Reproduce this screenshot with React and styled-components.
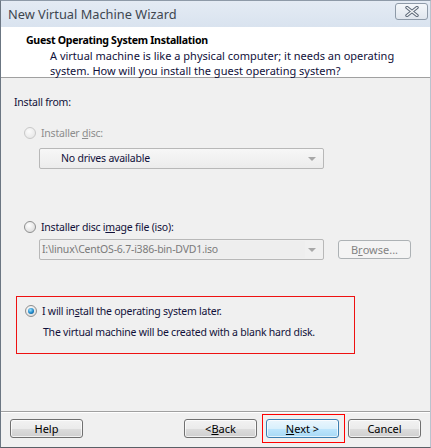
import React from 'react';
import styled, { createGlobalStyle } from 'styled-components';

const Global = createGlobalStyle`
  html, body { margin: 0; padding: 0; background: #f0f0f0; }
  body { font-family: 'Noto Sans', 'Open Sans', sans-serif; }
`;

const FONT = `'Noto Sans', 'Open Sans', sans-serif`;

const Window = styled.div`
  width: 431px;
  height: 448px;
  box-sizing: border-box;
  display: flex;
  flex-direction: column;
  border-left: 1px solid #6b7682;
  border-right: 1px solid #b9c3ce;
  border-bottom: 1px solid #5a5f66;
  border-top: 1px solid #8e9aa8;
  background: #f0f0f0;
  font-family: ${FONT};
  font-size: 10.5px;
  letter-spacing: -0.22px;
  color: #10103a;
`;

const TitleBar = styled.div`
  height: 26px;
  display: flex;
  align-items: center;
  justify-content: space-between;
  padding: 0 2px 0 7px;
  background: linear-gradient(#e4ebf4, #d9e3ef);
`;

const Title = styled.div`
  font-size: 12.8px;
  letter-spacing: 0;
  color: #3e4650;
`;

const CloseButton = styled.div`
  width: 31px;
  height: 15px;
  margin-top: -6px;
  border: 1px solid #8e9aa8;
  border-radius: 3px;
  background: linear-gradient(#f4f7fa, #e0e6ee);
  display: flex;
  align-items: center;
  justify-content: center;
`;

const Header = styled.div`
  height: 51px;
  background: #ffffff;
  border-bottom: 1px solid #a0a0a0;
  box-sizing: border-box;
  padding: 6px 0 0 25px;
`;

const HeaderTitle = styled.div`
  font-weight: bold;
  font-size: 10.6px;
  letter-spacing: -0.3px;
  line-height: 15px;
  color: #000;
`;

const HeaderText = styled.div`
  margin-left: 24px;
  font-size: 11px;
  letter-spacing: 0;
  line-height: 15px;
  color: #10103a;
`;

const Body = styled.div`
  flex: 1;
  padding: 17px 0 0 13px;
  display: flex;
  flex-direction: column;
  align-items: flex-start;
`;

const Label = styled.div`
  line-height: 15px;
  margin-top: ${p => p.$top || 0}px;
  margin-left: ${p => p.$left || 0}px;
  color: ${p => (p.$disabled ? '#8d8d8d' : '#10103a')};
`;

const RadioRow = styled.div`
  display: flex;
  align-items: center;
  gap: 5px;
  height: 15px;
  margin-top: ${p => p.$top || 0}px;
  margin-left: ${p => p.$left || 0}px;
  color: ${p => (p.$disabled ? '#8d8d8d' : '#10103a')};
`;

const RadioDot = styled.span`
  width: 12px;
  height: 12px;
  border-radius: 50%;
  box-sizing: border-box;
  border: 1px solid ${p => (p.$disabled ? '#c8c8c8' : '#8e8f8f')};
  background: ${p =>
    p.$disabled
      ? 'radial-gradient(circle at 40% 35%, #fbfbfb, #e2e2e2)'
      : 'radial-gradient(circle at 40% 35%, #ffffff, #d4d4d4)'};
  display: flex;
  align-items: center;
  justify-content: center;
  &::after {
    content: '';
    display: ${p => (p.$checked ? 'block' : 'none')};
    width: 6px;
    height: 6px;
    border-radius: 50%;
    background: radial-gradient(circle at 40% 35%, #9fe3ff, #1b86c8 55%, #0b3f6c);
  }
`;

const Combo = styled.div`
  width: 285px;
  height: 21px;
  box-sizing: border-box;
  margin-top: ${p => p.$top || 0}px;
  margin-left: 25px;
  border: 1px solid #b8b8b8;
  border-radius: 2px;
  background: ${p => (p.$flat ? '#f0f0f0' : 'linear-gradient(#f7f7f7, #ececec)')};
  display: flex;
  align-items: center;
  position: relative;
  color: ${p => (p.$disabled ? '#7b7b7b' : '#10103a')};
`;

const ComboText = styled.div`
  flex: 1;
  height: 17px;
  line-height: 17px;
  margin: 0 18px 0 2px;
  padding-left: ${p => p.$pad || 0}px;
  background: ${p => (p.$field ? '#eeeeee' : 'transparent')};
  white-space: nowrap;
`;

const Arrow = styled.span`
  position: absolute;
  right: 7px;
  top: 8px;
  width: 0;
  height: 0;
  border-left: 4px solid transparent;
  border-right: 4px solid transparent;
  border-top: 4px solid #a8a8a8;
`;

const ComboRow = styled.div`
  display: flex;
  align-items: center;
  gap: 14px;
  margin-top: ${p => p.$top || 0}px;
  & > ${Combo} { margin-top: 0; }
`;

const Button = styled.div`
  width: 73px;
  height: 19px;
  box-sizing: border-box;
  border: 1px solid ${p => (p.$focus ? '#3c7fb1' : p.$disabled ? '#adb2b5' : '#707070')};
  border-radius: 3px;
  background: ${p =>
    p.$disabled
      ? '#f4f4f4'
      : p.$focus
      ? 'linear-gradient(#eaf6fd 0%, #d9f0fc 50%, #bee6fd 51%, #a7d9f5 100%)'
      : 'linear-gradient(#f2f2f2 0%, #ebebeb 50%, #dddddd 51%, #cfcfcf 100%)'};
  box-shadow: inset 0 0 0 1px ${p => (p.$disabled ? 'transparent' : 'rgba(255,255,255,0.7)')};
  display: flex;
  align-items: center;
  justify-content: center;
  color: ${p => (p.$disabled ? '#838383' : '#000')};
  font-size: 11px;
  letter-spacing: 0;
`;

const HiliteBox = styled.div`
  position: relative;
  &::after {
    content: '';
    position: absolute;
    left: -4px;
    right: -6px;
    top: -5px;
    bottom: -5px;
    border: 1px solid #ff0000;
    pointer-events: none;
  }
`;

const RedBox = styled.div`
  margin: 36px 0 0 2px;
  width: 339px;
  height: 58px;
  box-sizing: border-box;
  border: 1px solid #ee1111;
  padding-top: 6px;
  padding-left: 8px;
`;

const Footer = styled.div`
  height: 36px;
  box-sizing: border-box;
  border-top: 1px solid #a0a0a0;
  box-shadow: inset 0 1px 0 #fff;
  display: flex;
  align-items: flex-start;
  padding: 7px 9px 0 9px;
  gap: 9px;
`;

const Spacer = styled.div`
  flex: 1;
`;

function CloseIcon() {
  return (
    <svg width="14" height="11" viewBox="0 0 14 11">
      <path d="M2 1.5 L12 9.5 M12 1.5 L2 9.5" stroke="#5b6776" strokeWidth="3.4" strokeLinecap="round" />
      <path d="M2 1.5 L12 9.5 M12 1.5 L2 9.5" stroke="#f4f6f8" strokeWidth="1.4" strokeLinecap="round" />
    </svg>
  );
}

export default function App() {
  return (
    <>
      <Global />
      <Window>
        <TitleBar>
          <Title>New Virtual Machine Wizard</Title>
          <CloseButton>
            <CloseIcon />
          </CloseButton>
        </TitleBar>
        <Header>
          <HeaderTitle>Guest Operating System Installation</HeaderTitle>
          <HeaderText>
            A virtual machine is like a physical computer; it needs an operating
            <br />
            system. How will you install the guest operating system?
          </HeaderText>
        </Header>
        <Body>
          <Label>Install from:</Label>
          <RadioRow $top={15} $left={10} $disabled>
            <RadioDot $disabled />
            <span>
              Installer <u>d</u>isc:
            </span>
          </RadioRow>
          <Combo $top={8}>
            <ComboText $pad={19}>No drives available</ComboText>
            <Arrow />
          </Combo>
          <RadioRow $top={50} $left={10}>
            <RadioDot />
            <span>
              Installer disc i<u>m</u>age file (iso):
            </span>
          </RadioRow>
          <ComboRow $top={5}>
            <Combo $flat $disabled>
              <ComboText $field>I:\linux\CentOS-6.7-i386-bin-DVD1.iso</ComboText>
              <Arrow />
            </Combo>
            <Button $disabled>
              B<u>r</u>owse...
            </Button>
          </ComboRow>
          <RedBox>
            <RadioRow>
              <RadioDot $checked />
              <span>
                I will in<u>s</u>tall the operating system later.
              </span>
            </RadioRow>
            <Label $top={7} $left={18}>
              The virtual machine will be created with a blank hard disk.
            </Label>
          </RedBox>
        </Body>
        <Footer>
          <Button>Help</Button>
          <Spacer />
          <Button>
            &lt; <u>B</u>ack
          </Button>
          <HiliteBox>
            <Button $focus>
              <u>N</u>ext &gt;
            </Button>
          </HiliteBox>
          <Button>Cancel</Button>
        </Footer>
      </Window>
    </>
  );
}
